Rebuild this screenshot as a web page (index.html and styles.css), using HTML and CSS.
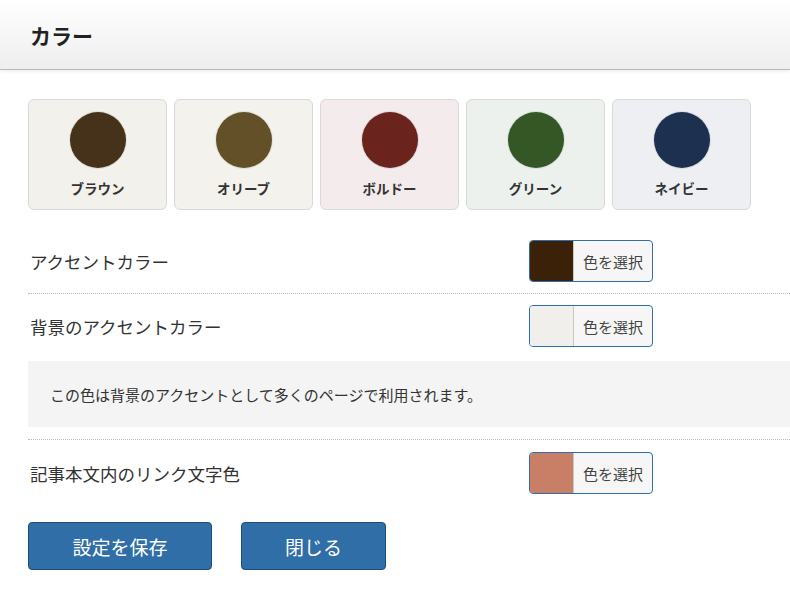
FILE: index.html
```html
<!DOCTYPE html>
<html lang="ja">
    <head>
        <meta charset="utf-8">
        <title>カラー</title>
        <link rel="stylesheet" href="styles.css">
    </head>
    <body>
        <header class="panel-header">
            <h1>カラー</h1>
        </header>

        <main class="panel-body">
            <ul class="presets">
                <li class="preset preset-brown"><span class="dot"></span>ブラウン</li>
                <li class="preset preset-olive"><span class="dot"></span>オリーブ</li>
                <li class="preset preset-bordeaux"><span class="dot"></span>ボルドー</li>
                <li class="preset preset-green"><span class="dot"></span>グリーン</li>
                <li class="preset preset-navy"><span class="dot"></span>ネイビー</li>
            </ul>

            <section class="setting setting-first">
                <div class="setting-row">
                    <label>アクセントカラー</label>
                    <button class="picker"><span class="chip chip-accent"></span><span class="picker-text">色を選択</span></button>
                </div>
            </section>

            <section class="setting setting-note">
                <div class="setting-row">
                    <label>背景のアクセントカラー</label>
                    <button class="picker"><span class="chip chip-bg"></span><span class="picker-text">色を選択</span></button>
                </div>
                <p class="note">この色は背景のアクセントとして多くのページで利用されます。</p>
            </section>

            <section class="setting setting-last">
                <div class="setting-row">
                    <label>記事本文内のリンク文字色</label>
                    <button class="picker"><span class="chip chip-link"></span><span class="picker-text">色を選択</span></button>
                </div>
            </section>

            <div class="actions">
                <button class="btn btn-save">設定を保存</button>
                <button class="btn btn-close">閉じる</button>
            </div>
        </main>
    </body>
</html>
```

FILE: styles.css
```css
body {
    margin: 0;
    font-family: 'Noto Sans CJK JP', 'Noto Sans', sans-serif;
    color: #333;
    background: #fff;
}

.panel-header {
    height: 69px;
    display: flex;
    align-items: center;
    padding-left: 30px;
    background: linear-gradient(#ffffff, #eeeeee);
    border-bottom: 1px solid #b8b8b8;
    box-shadow: 0 2px 3px rgba(0, 0, 0, 0.06);
}

.panel-header h1 {
    margin: 0;
    font-size: 21px;
    font-weight: bold;
    color: #222;
}

.panel-body {
    padding: 29px 0 0 28px;
}

.presets {
    list-style: none;
    margin: 0;
    padding: 0;
    display: flex;
    gap: 7px;
}

.preset {
    width: 137px;
    height: 97px;
    padding-top: 12px;
    border: 1px solid #d9d9d9;
    border-radius: 6px;
    display: flex;
    flex-direction: column;
    align-items: center;
    font-size: 13.5px;
    font-weight: bold;
    color: #333;
}

.dot {
    width: 56px;
    height: 56px;
    border-radius: 50%;
    margin-bottom: 10px;
    box-shadow: 0 0 0 1px rgba(0, 0, 0, 0.08);
}

.preset-brown { background: #f2f1ec; }
.preset-brown .dot { background: #46321a; }
.preset-olive { background: #f3f2ed; }
.preset-olive .dot { background: #634f28; }
.preset-bordeaux { background: #f4ebec; }
.preset-bordeaux .dot { background: #6b231e; }
.preset-green { background: #ecf1ed; }
.preset-green .dot { background: #355726; }
.preset-navy { background: #eeeff3; }
.preset-navy .dot { background: #1e3050; }

.setting {
    border-bottom: 1px dotted #bdbdbd;
    padding: 11px 0;
}

.setting-first {
    margin-top: 30px;
    padding-top: 0;
}

.setting-note {
    padding-bottom: 12px;
}

.setting-last {
    border-bottom: none;
    padding-top: 12px;
    padding-bottom: 0;
}

.setting-row {
    display: grid;
    grid-template-columns: 501px auto;
    align-items: center;
}

.setting-row label {
    font-size: 17.5px;
    color: #333;
    padding-left: 2px;
}

.picker {
    width: 124px;
    height: 42px;
    padding: 0;
    display: flex;
    border: 1px solid #2f6db3;
    border-radius: 4px;
    background: #f6f6f6;
    overflow: hidden;
    font-family: inherit;
    cursor: pointer;
}

.chip {
    width: 43px;
    height: 100%;
    border-right: 1px solid #c8c8c8;
}

.chip-accent { background: #3a2108; }
.chip-bg { background: #f0efeb; }
.chip-link { background: #c97f66; }

.picker-text {
    flex: 1;
    align-self: center;
    font-size: 15px;
    color: #444;
}

.note {
    margin: 14px 0 0;
    height: 66px;
    display: flex;
    align-items: center;
    padding-left: 22px;
    background: #f4f4f4;
    font-size: 15px;
    color: #333;
}

.actions {
    display: flex;
    gap: 29px;
    margin-top: 28px;
}

.btn {
    height: 48px;
    border: 1px solid #1f4d7a;
    border-radius: 4px;
    background: #2f6ea6;
    color: #fff;
    font-family: inherit;
    font-size: 19px;
    cursor: pointer;
}

.btn-save {
    width: 184px;
}

.btn-close {
    width: 145px;
}
```
